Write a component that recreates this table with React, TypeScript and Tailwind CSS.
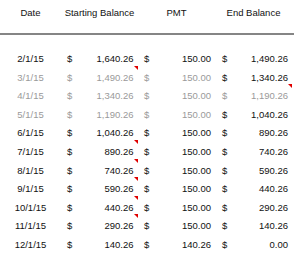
type Row = {
  date: string;
  start: string;
  pmt: string;
  end: string;
  dim: boolean;
  endDim: boolean;
  startNote: boolean;
  endNote: boolean;
};

const rows: Row[] = [
  { date: "2/1/15", start: "1,640.26", pmt: "150.00", end: "1,490.26", dim: false, endDim: false, startNote: true, endNote: false },
  { date: "3/1/15", start: "1,490.26", pmt: "150.00", end: "1,340.26", dim: true, endDim: false, startNote: false, endNote: true },
  { date: "4/1/15", start: "1,340.26", pmt: "150.00", end: "1,190.26", dim: true, endDim: true, startNote: false, endNote: false },
  { date: "5/1/15", start: "1,190.26", pmt: "150.00", end: "1,040.26", dim: true, endDim: false, startNote: false, endNote: false },
  { date: "6/1/15", start: "1,040.26", pmt: "150.00", end: "890.26", dim: false, endDim: false, startNote: true, endNote: false },
  { date: "7/1/15", start: "890.26", pmt: "150.00", end: "740.26", dim: false, endDim: false, startNote: true, endNote: false },
  { date: "8/1/15", start: "740.26", pmt: "150.00", end: "590.26", dim: false, endDim: false, startNote: true, endNote: false },
  { date: "9/1/15", start: "590.26", pmt: "150.00", end: "440.26", dim: false, endDim: false, startNote: true, endNote: false },
  { date: "10/1/15", start: "440.26", pmt: "150.00", end: "290.26", dim: false, endDim: false, startNote: true, endNote: false },
  { date: "11/1/15", start: "290.26", pmt: "150.00", end: "140.26", dim: false, endDim: false, startNote: false, endNote: false },
  { date: "12/1/15", start: "140.26", pmt: "140.26", end: "0.00", dim: false, endDim: false, startNote: false, endNote: false },
];

function Note() {
  return (
    <span className="absolute right-0 top-[16px] h-0 w-0 border-t-[4px] border-l-[4px] border-t-[#e00000] border-l-transparent" />
  );
}

export default function App() {
  return (
    <div className="h-[261px] w-[300px] bg-white text-[9.5px] leading-[12px] text-[#111111] [font-family:'Liberation_Sans',Arial,sans-serif]">
      <div className="flex h-[35px] w-[294px] border-b-2 border-[#858585] pt-[7px]">
        <div className="w-[61px] text-center">Date</div>
        <div className="w-[77px] text-center">Starting Balance</div>
        <div className="w-[77px] text-center">PMT</div>
        <div className="w-[77px] text-center">End Balance</div>
      </div>
      <div className="pt-[14.7px]">
        {rows.map((r) => {
          const left = r.dim ? "text-[#9a9a9a]" : "";
          const right = r.endDim ? "text-[#9a9a9a]" : "";
          return (
            <div key={r.date} className="flex h-[18.6px] items-center">
              <div className={`w-[61px] text-center ${left}`}>{r.date}</div>
              <div className={`relative flex h-full w-[77px] items-center justify-between pl-[6px] pr-[4.5px] ${left}`}>
                <span>$</span>
                <span>{r.start}</span>
                {r.startNote && <Note />}
              </div>
              <div className={`flex h-full w-[77px] items-center justify-between pl-[6px] pr-[4px] ${left}`}>
                <span>$</span>
                <span>{r.pmt}</span>
              </div>
              <div className={`relative flex h-full w-[77px] items-center justify-between pl-[7px] pr-[4px] ${right}`}>
                <span>$</span>
                <span>{r.end}</span>
                {r.endNote && <Note />}
              </div>
            </div>
          );
        })}
      </div>
    </div>
  );
}
